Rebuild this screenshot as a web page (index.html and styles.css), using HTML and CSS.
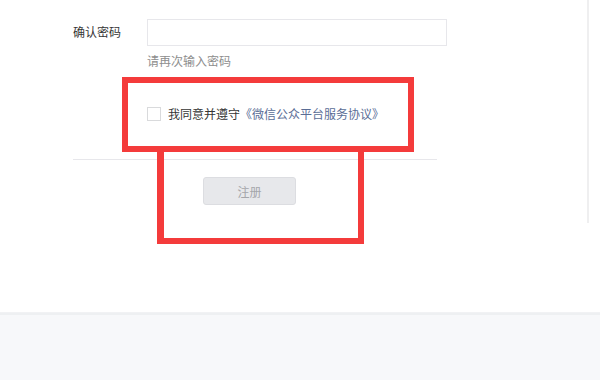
FILE: index.html
```html
<!DOCTYPE html>
<html lang="zh-CN">
<head>
<meta charset="utf-8">
<title>注册</title>
<link rel="stylesheet" href="styles.css">
</head>
<body>
<div class="page">
  <div class="main">
    <div class="form">
      <div class="row">
        <label class="label">确认密码</label>
        <div class="input"></div>
      </div>
      <div class="hint">请再次输入密码</div>
      <div class="agree">
        <span class="checkbox"></span>
        <span class="agree-text">我同意并遵守<a class="link">《微信公众平台服务协议》</a></span>
      </div>
      <div class="divider"></div>
      <div class="actions">
        <button class="btn" disabled>注册</button>
      </div>
    </div>
    <div class="rail"></div>
  </div>
  <div class="footer"></div>
  <div class="mark mark-agree"></div>
  <div class="mark mark-btn"></div>
</div>
</body>
</html>
```
FILE: styles.css
```css
html, body {
  margin: 0;
  padding: 0;
  background: #fff;
}
body {
  font-family: "Noto Sans CJK SC", "Noto Sans", sans-serif;
  font-size: 12px;
  color: #353535;
}
.page {
  position: relative;
  width: 600px;
  height: 380px;
  overflow: hidden;
  display: flex;
  flex-direction: column;
}
.main {
  height: 312px;
  display: flex;
  flex-direction: row;
}
.form {
  flex: 1;
  padding: 19px 0 0 73px;
}
.row {
  display: flex;
  align-items: flex-start;
}
.label {
  width: 74px;
  line-height: 16px;
  margin-top: 5px;
  color: #353535;
}
.input {
  width: 298px;
  height: 25px;
  border: 1px solid #e7e7eb;
  background: #fff;
}
.hint {
  margin: 7px 0 0 74px;
  line-height: 16px;
  color: #8d8d8d;
}
.agree {
  margin: 37px 0 0 74px;
  display: flex;
  align-items: center;
  height: 16px;
}
.checkbox {
  width: 12px;
  height: 12px;
  border: 1px solid #d9dadc;
  background: #fff;
  margin-right: 7px;
}
.agree-text {
  line-height: 16px;
}
.link {
  color: #5a6d96;
  text-decoration: none;
}
.divider {
  margin-top: 37px;
  width: 364px;
  height: 1px;
  background: #e7e7eb;
}
.actions {
  margin: 17px 0 0 130px;
}
.btn {
  width: 93px;
  height: 28px;
  border: 1px solid #dcdde1;
  border-radius: 3px;
  background: #e7e8eb;
  color: #a5a6aa;
  font-family: inherit;
  font-size: 12px;
  padding: 0;
}
.rail {
  width: 2px;
  height: 223px;
  margin-right: 11px;
  background: #efeff0;
}
.footer {
  flex: 1;
  background: #f7f8fa;
  border-top: 1px solid #f1f2f4;
  box-shadow: inset 0 2px 0 #eef0f2;
}
.mark {
  position: absolute;
  border: 6px solid #f43b3b;
  box-sizing: border-box;
}
.mark-agree {
  left: 122px;
  top: 77px;
  width: 292px;
  height: 75px;
}
.mark-btn {
  left: 157px;
  top: 146px;
  width: 207px;
  height: 98px;
  border-width: 6px 6px 6px 7px;
}
```
